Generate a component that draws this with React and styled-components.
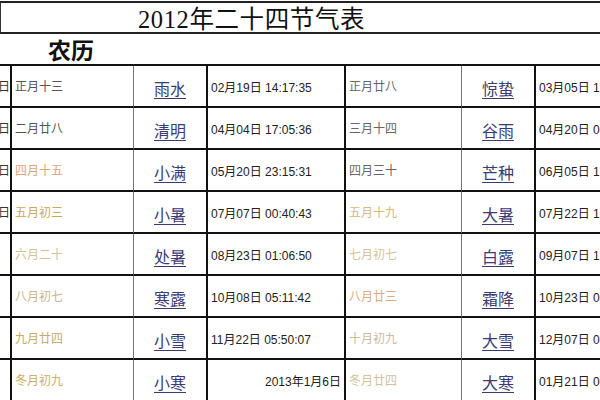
import React from 'react';
import styled, { createGlobalStyle } from 'styled-components';

const GlobalStyle = createGlobalStyle`
  html, body {
    margin: 0;
    padding: 0;
    background: #fff;
  }
`;

const serif = `"Liberation Serif", "Noto Sans CJK SC", serif`;
const sans = `"Liberation Sans", "Noto Sans CJK SC", sans-serif`;

const Page = styled.div`
  width: 600px;
  height: 400px;
  overflow: hidden;
  background: #fff;
  color: #111;
  font-family: ${serif};
`;

const TitleBar = styled.div`
  box-sizing: border-box;
  margin-top: 1px;
  height: 33px;
  border-top: 2px solid #222;
  border-bottom: 2px solid #222;
  border-left: 1px solid #333;
  display: flex;
  align-items: center;
  padding-left: 137px;
`;

const Title = styled.h1`
  margin: 0;
  font-family: ${serif};
  font-weight: normal;
  font-size: 24.5px;
  letter-spacing: 0.6px;
  color: #111;
  white-space: nowrap;
`;

const SubHeader = styled.div`
  height: 30px;
  display: flex;
  align-items: center;
  padding-left: 48px;
  font-size: 23px;
  font-weight: 600;
  color: #111;
`;

const Grid = styled.div`
  display: grid;
  grid-template-columns: 12px 122px 74px 138px 116px 74px 1fr;
  grid-auto-rows: 42px;
  border-top: 2px solid #111;
`;

const lineFor = {
  stub: '2px solid #111',
  lunar: '1px solid #777',
  term: '2px solid #111',
  time: '2px solid #111',
  last: 'none',
};

const Cell = styled.div`
  box-sizing: border-box;
  min-width: 0;
  overflow: hidden;
  white-space: nowrap;
  display: flex;
  align-items: center;
  border-bottom: 2px solid #111;
  border-right: ${p => lineFor[p.$line]};
`;

const Stub = styled(Cell)`
  justify-content: flex-end;
  font-family: ${serif};
  font-size: 12px;
  color: #333;
`;

const Lunar = styled(Cell)`
  padding-left: 3px;
  font-family: ${serif};
  font-size: 12px;
  color: ${p => p.$color};
`;

const Term = styled(Cell)`
  justify-content: center;
  padding-top: 3px;
`;

const TermLink = styled.a`
  font-family: ${serif};
  font-size: 16px;
  color: #3b3b72;
  text-decoration: underline;
  text-underline-offset: 3px;
`;

const Time = styled(Cell)`
  padding: 0 3px;
  font-family: ${sans};
  font-size: 12px;
  color: #222;
  justify-content: ${p => (p.$right ? 'flex-end' : 'flex-start')};
`;

const rows = [
  { stub: '日', a: ['正月十三', '#555'], t1: '雨水', d1: '02月19日 14:17:35', b: ['正月廿八', '#666'], t2: '惊蛰', d2: '03月05日 12:21:00' },
  { stub: '日', a: ['二月廿八', '#555'], t1: '清明', d1: '04月04日 17:05:36', b: ['三月十四', '#666'], t2: '谷雨', d2: '04月20日 00:12:00' },
  { stub: '日', a: ['四月十五', '#dfa27e'], t1: '小满', d1: '05月20日 23:15:31', b: ['四月三十', '#666'], t2: '芒种', d2: '06月05日 13:25:00' },
  { stub: '日', a: ['五月初三', '#c9a85e'], t1: '小暑', d1: '07月07日 00:40:43', b: ['五月十九', '#d3ba7e'], t2: '大暑', d2: '07月22日 18:00:00' },
  { stub: '', a: ['六月二十', '#d4c29c'], t1: '处暑', d1: '08月23日 01:06:50', b: ['七月初七', '#d6c49a'], t2: '白露', d2: '09月07日 13:29:00' },
  { stub: '', a: ['八月初七', '#cdb48e'], t1: '寒露', d1: '10月08日 05:11:42', b: ['八月廿三', '#e0aa82'], t2: '霜降', d2: '10月23日 08:13:00' },
  { stub: '', a: ['九月廿四', '#c9aa6a'], t1: '小雪', d1: '11月22日 05:50:07', b: ['十月初九', '#cbbba0'], t2: '大雪', d2: '12月07日 00:18:00' },
  { stub: '', a: ['冬月初九', '#c9b062'], t1: '小寒', d1: '2013年1月6日', right: true, b: ['冬月廿四', '#d2c29a'], t2: '大寒', d2: '01月21日 00:01:00' },
];

export default function App() {
  return (
    <Page>
      <GlobalStyle />
      <TitleBar>
        <Title>2012年二十四节气表</Title>
      </TitleBar>
      <SubHeader>农历</SubHeader>
      <Grid>
        {rows.map((r, i) => (
          <React.Fragment key={i}>
            <Stub $line="stub">{r.stub}</Stub>
            <Lunar $line="lunar" $color={r.a[1]}>{r.a[0]}</Lunar>
            <Term $line="term"><TermLink>{r.t1}</TermLink></Term>
            <Time $line="time" $right={r.right}>{r.d1}</Time>
            <Lunar $line="lunar" $color={r.b[1]}>{r.b[0]}</Lunar>
            <Term $line="term"><TermLink>{r.t2}</TermLink></Term>
            <Time $line="last">{r.d2}</Time>
          </React.Fragment>
        ))}
      </Grid>
    </Page>
  );
}
